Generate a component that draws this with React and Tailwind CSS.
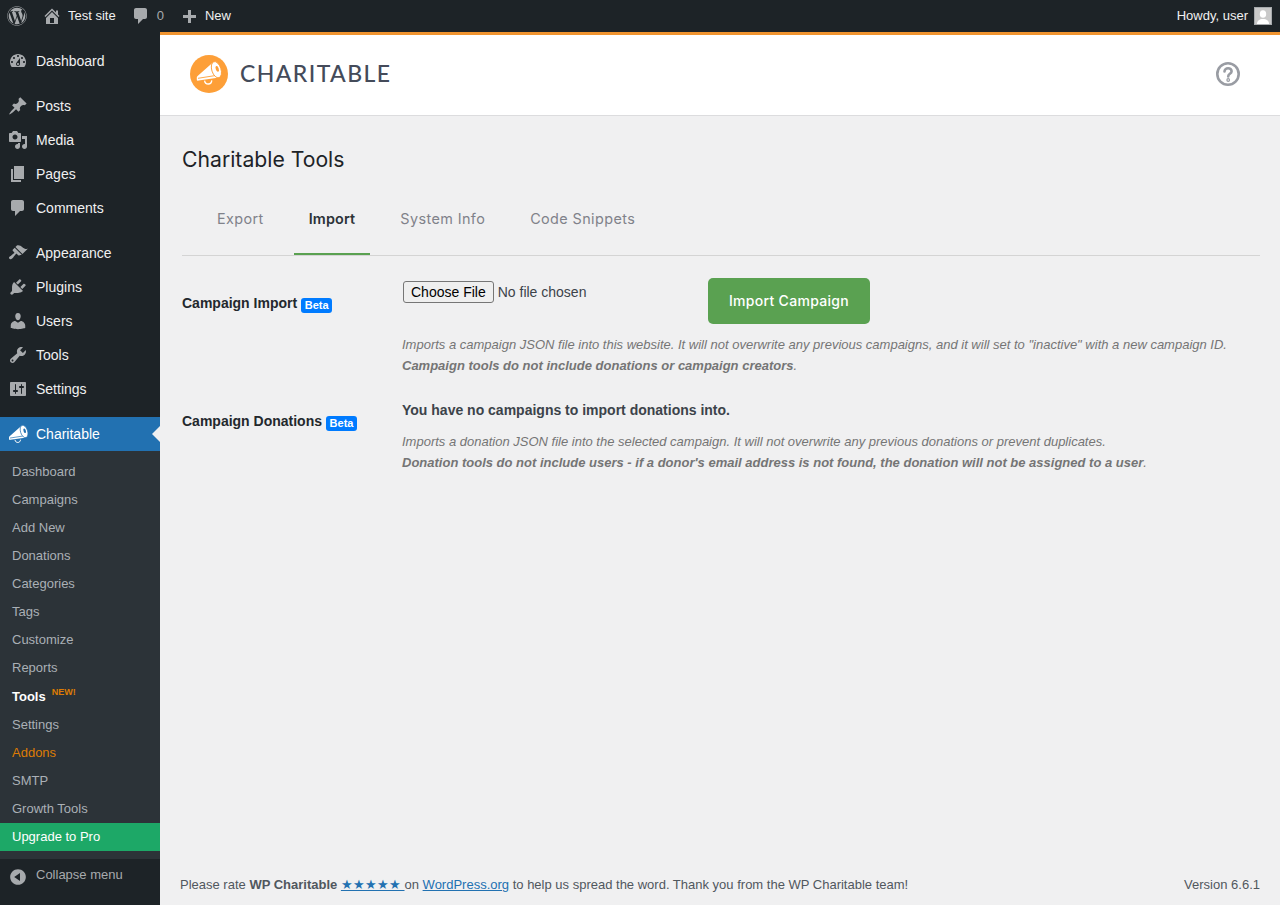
import React from 'react';
import { FaWordpress } from 'react-icons/fa';

const sans = { fontFamily: '"Liberation Sans", Arial, sans-serif' };
const inter = { fontFamily: 'Inter, sans-serif' };

// dashicons, all on a 20x20 grid
const icons = {
    dashboard: 'M3.76 16h12.48c1.1-1.37 1.76-3.11 1.76-5 0-4.42-3.58-8-8-8s-8 3.58-8 8c0 1.89.66 3.63 1.76 5zM10 4c.55 0 1 .45 1 1s-.45 1-1 1-1-.45-1-1 .45-1 1-1zM6 6c.55 0 1 .45 1 1s-.45 1-1 1-1-.45-1-1 .45-1 1-1zm8 0c.55 0 1 .45 1 1s-.45 1-1 1-1-.45-1-1 .45-1 1-1zm-5.37 5.55L12 7v6c0 1.1-.9 2-2 2s-2-.9-2-2c0-.57.24-1.08.63-1.45zM4 10c.55 0 1 .45 1 1s-.45 1-1 1-1-.45-1-1 .45-1 1-1zm12 0c.55 0 1 .45 1 1s-.45 1-1 1-1-.45-1-1 .45-1 1-1zm-5 3c0-.55-.45-1-1-1s-1 .45-1 1 .45 1 1 1 1-.45 1-1z',
    posts: 'M10.44 3.02l1.82-1.82 6.36 6.35-1.83 1.82c-1.05-.68-2.48-.57-3.41.36l-.75.75c-.92.93-1.04 2.35-.35 3.41l-1.83 1.82-2.41-2.41-2.8 2.79c-.42.42-3.38 2.71-3.8 2.29s1.86-3.39 2.28-3.81l2.79-2.79L4.1 9.36l1.83-1.82c1.05.69 2.48.57 3.4-.36l.75-.75c.93-.92 1.05-2.35.36-3.41z',
    media: 'M13 11V4c0-.55-.45-1-1-1h-1.67L9 1H5L3.67 3H2c-.55 0-1 .45-1 1v7c0 .55.45 1 1 1h10c.55 0 1-.45 1-1zM7 4.5c1.38 0 2.5 1.12 2.5 2.5S8.38 9.5 7 9.5 4.5 8.38 4.5 7 5.62 4.5 7 4.5zM14 6h5v10.5c0 1.38-1.12 2.5-2.5 2.5S14 17.88 14 16.5s1.12-2.5 2.5-2.5c.17 0 .34.02.5.05V9h-3V6zm-4 8.05V13h2v3.5c0 1.38-1.12 2.5-2.5 2.5S7 17.88 7 16.5 8.12 14 9.5 14c.17 0 .34.02.5.05z',
    pages: 'M6 15V2h10v13H6zm-1 1h8v2H3V5h2v11z',
    comments: 'M5 2h9c1.1 0 2 .9 2 2v7c0 1.1-.9 2-2 2h-2l-5 5v-5H5c-1.1 0-2-.9-2-2V4c0-1.1.9-2 2-2z',
    appearance: 'M14.48 11.06L7.41 3.99l1.5-1.5c.5-.56 2.3-.47 3.51.32 1.21.8 1.43 1.28 2.91 2.1 1.18.64 2.45 1.26 4.45.85zm-.71.71L6.7 4.7 4.93 6.47c-.39.39-.39 1.02 0 1.41l1.06 1.06c.39.39.39 1.03 0 1.42-.6.6-1.43 1.11-2.21 1.69-.35.26-.7.53-1.01.84C1.43 13.23.4 14.75 1.4 15.75c.99.99 2.53-.03 3.82-1.37.31-.31.58-.66.84-1.02.57-.78 1.08-1.61 1.69-2.21.39-.39 1.02-.39 1.41 0l1.06 1.06c.39.39 1.02.39 1.41 0z',
    plugins: 'M13.11 4.36L9.87 7.6 8 5.73l3.24-3.24c.35-.34 1.05-.2 1.56.32.52.51.66 1.21.31 1.55zm-8 1.77l.91-1.12 9.01 9.01-1.19.84c-.71.71-2.63 1.16-3.82 1.16H6.14L4.9 17.26c-.59.59-1.54.59-2.12 0-.59-.58-.59-1.53 0-2.12l1.24-1.24v-3.88c0-1.13.4-3.19 1.09-3.89zm7.26 3.97l3.24-3.24c.34-.35 1.04-.21 1.55.31.52.51.66 1.21.31 1.55l-3.24 3.25z',
    users: 'M10 9.25c-2.27 0-2.73-3.44-2.73-3.44C7 4.02 7.82 2 9.97 2c2.16 0 2.98 2.02 2.71 3.81 0 0-.41 3.44-2.68 3.44zm0 2.57L12.72 10c2.39 0 4.52 2.33 4.52 4.53v2.49s-3.65 1.13-7.24 1.13c-3.65 0-7.24-1.13-7.24-1.13v-2.49c0-2.25 1.94-4.48 4.47-4.48z',
    tools: 'M16.68 9.77c-1.34 1.34-3.3 1.67-4.95.99l-5.41 6.52c-.99.99-2.59.99-3.58 0s-.99-2.59 0-3.57l6.52-5.42c-.68-1.65-.35-3.61.99-4.95 1.28-1.28 3.12-1.62 4.72-1.06l-2.89 2.89 2.82 2.82 2.86-2.87c.53 1.58.18 3.39-1.08 4.65zM3.81 16.21c.4.39 1.04.39 1.43 0 .4-.4.4-1.04 0-1.43-.39-.4-1.03-.4-1.43 0-.39.39-.39 1.03 0 1.43z',
    settings: 'M18 16V4c0-.55-.45-1-1-1H3c-.55 0-1 .45-1 1v12c0 .55.45 1 1 1h14c.55 0 1-.45 1-1zM8 11h1c.55 0 1 .45 1 1s-.45 1-1 1H8v1.5c0 .28-.22.5-.5.5s-.5-.22-.5-.5V13H6c-.55 0-1-.45-1-1s.45-1 1-1h1V5.5c0-.28.22-.5.5-.5s.5.22.5.5V11zm5-2h-1c-.55 0-1-.45-1-1s.45-1 1-1h1V5.5c0-.28.22-.5.5-.5s.5.22.5.5V7h1c.55 0 1 .45 1 1s-.45 1-1 1h-1v5.5c0 .28-.22.5-.5.5s-.5-.22-.5-.5V9z',
    home: 'M16 8.5l1.53 1.53-1.06 1.06L10 4.62l-6.47 6.47-1.06-1.06L10 2.5l4 4v-2h2v4zm-6-2.46l6 5.99V18H4v-5.97zM12 17v-5H8v5h4z',
    plus: 'M17 9v3h-5v5H9v-5H4V9h5V4h3v5h5z',
    collapse: 'M10 2.16c4.33 0 7.84 3.51 7.84 7.84s-3.51 7.84-7.84 7.84S2.16 14.33 2.16 10 5.71 2.16 10 2.16zm2 11.72V6.12L6.18 9.97z',
};

const Dash = ({ name, className }) => (
    <svg viewBox="0 0 20 20" fill="currentColor" className={className}>
        <path d={icons[name]} />
    </svg>
);

// megaphone from the Charitable logo, drawn on the logo's 38px grid
const Megaphone = ({ className, viewBox = '0 0 38 38', hole }) => (
    <svg viewBox={viewBox} className={className}>
        <path d="M7.6 21 L22 8.2 L27.5 22.8 L8.6 25.6 C7.4 25.8 6.8 25.2 6.8 24.4 L6.8 22.6 C6.8 22 7.1 21.5 7.6 21 Z" fill="#fff" />
        <path d="M8 23.3 L25 20.6" stroke={hole} strokeWidth=".9" fill="none" />
        <ellipse cx="26.4" cy="14.7" rx="4.6" ry="8.4" transform="rotate(-18 26.4 14.7)" fill="#fff" stroke={hole} strokeWidth=".9" />
        <ellipse cx="27.2" cy="13.8" rx="1.5" ry="3" transform="rotate(-18 27.2 13.8)" fill={hole} />
        <path d="M14.6 25.6 c.2 2.3 1.9 3.4 3.7 3.4 s3.3-1.2 3.5-3.6" fill="none" stroke="#fff" strokeWidth="1.3" />
    </svg>
);

const mainMenu = [
    [['dashboard', 'Dashboard']],
    [['posts', 'Posts'], ['media', 'Media'], ['pages', 'Pages'], ['comments', 'Comments']],
    [['appearance', 'Appearance'], ['plugins', 'Plugins'], ['users', 'Users'], ['tools', 'Tools'], ['settings', 'Settings']],
];

const subMenu = ['Dashboard', 'Campaigns', 'Add New', 'Donations', 'Categories', 'Tags', 'Customize', 'Reports'];
const subMenuEnd = ['Settings', 'Addons', 'SMTP', 'Growth Tools'];

const Sidebar = () => (
    <aside className="w-40 shrink-0 bg-[#1d2327] text-sm text-[#f0f0f1]" style={sans}>
        <nav className="pt-3">
            {mainMenu.map((group, i) => (
                <div key={i} className="mb-[11px]">
                    {group.map(([icon, label]) => (
                        <div key={label} className="flex h-[34px] items-center">
                            <Dash name={icon} className="ml-[8px] h-5 w-5 text-[#a7aaad]" />
                            <span className="ml-2">{label}</span>
                        </div>
                    ))}
                </div>
            ))}
            <div className="relative flex h-[34px] items-center bg-[#2271b1] text-white">
                <Megaphone className="ml-[8px] h-5 w-5" viewBox="5.5 5 26 26" hole="#2271b1" />
                <span className="ml-2">Charitable</span>
                <span className="absolute right-0 top-[9px] border-y-[8px] border-r-[8px] border-y-transparent border-r-[#f0f0f1]" />
            </div>
            <div className="bg-[#2c3338] pt-[7px] pb-2 text-[13px] text-[#aab0b6]">
                {subMenu.map((label) => (
                    <div key={label} className="flex h-7 items-center pl-3">{label}</div>
                ))}
                <div className="flex h-[29px] items-center pl-3 pt-px font-bold text-white">
                    Tools
                    <span className="relative -top-[5px] ml-[6px] text-[9px] text-[#dd7c04]">NEW!</span>
                </div>
                {subMenuEnd.map((label) => (
                    <div key={label} className={`flex h-7 items-center pl-3 ${label === 'Addons' ? 'text-[#dd7c04]' : ''}`}>{label}</div>
                ))}
                <div className="flex h-7 items-center bg-[#1da867] pl-3 text-white">Upgrade to Pro</div>
            </div>
            <div className="flex h-[30px] items-center pt-[2px] text-[13px] text-[#a7aaad]">
                <Dash name="collapse" className="ml-2 mt-[3px] h-5 w-5" />
                <span className="ml-2">Collapse menu</span>
            </div>
        </nav>
    </aside>
);

const AdminBar = () => (
    <header className="flex h-8 items-center bg-[#1d2327] text-[13px] text-[#f0f0f1]" style={sans}>
        <FaWordpress className="ml-[7px] h-5 w-5 text-[#a7aaad]" />
        <Dash name="home" className="ml-[15px] h-5 w-5 text-[#a7aaad]" />
        <span className="ml-[6px]">Test site</span>
        <Dash name="comments" className="ml-[15px] h-5 w-5 text-[#a7aaad]" />
        <span className="ml-[6px] text-[#a7aaad]">0</span>
        <Dash name="plus" className="ml-[15px] h-5 w-5 text-[#a7aaad]" />
        <span className="ml-[6px]">New</span>
        <span className="ml-auto">Howdy, user</span>
        <div className="ml-[6px] mr-2 flex h-[18px] w-[18px] items-end justify-center overflow-hidden border border-[#a7aaad] bg-[#c9c9c9]">
            <svg viewBox="0 0 16 16" fill="#fff" className="h-4 w-4">
                <ellipse cx="8" cy="6" rx="3.2" ry="3.8" />
                <path d="M2 16c0-3.5 2.5-5 6-5s6 1.5 6 5z" />
            </svg>
        </div>
    </header>
);

const Beta = () => (
    <span className="ml-1 inline-block h-[15px] w-[31px] rounded-[3px] bg-[#007bff] text-center align-[-1px] text-[11px] font-bold leading-[15px] text-white">Beta</span>
);

const tabs = ['Export', 'Import', 'System Info', 'Code Snippets'];

const Main = () => (
    <main className="flex min-w-0 flex-1 flex-col bg-[#f0f0f1]">
        <div className="flex h-[84px] items-center border-t-[3px] border-b border-t-[#f0942f] border-b-[#dcdcde] bg-white pb-[2px] pl-[30px] pr-[38px]">
            <div className="h-[38px] w-[38px] rounded-full bg-[#fd9f38]">
                <Megaphone className="h-[38px] w-[38px]" hole="#fd9f38" />
            </div>
            <span className="mb-px ml-3 text-[23px] font-medium leading-none tracking-[1.4px] text-[#444b5a]" style={{ fontFamily: 'Lato, sans-serif' }}>CHARITABLE</span>
            <svg viewBox="0 0 28 28" className="mb-px ml-auto h-7 w-7" fill="none" stroke="#999ca3" strokeWidth="2.6">
                <circle cx="14" cy="14" r="10.7" />
                <path d="M10.5 11.5c0-2 1.6-3.3 3.6-3.3s3.5 1.3 3.5 3c0 2.6-3.4 2.6-3.4 5.2" strokeLinecap="round" />
                <circle cx="14.2" cy="20" r=".6" />
            </svg>
        </div>

        <div className="flex-1 pl-[22px] pr-5">
            <h1 className="mt-[30px] text-[21.2px] leading-[27px] text-[#1d2327]" style={inter}>Charitable Tools</h1>

            <div className="mt-[19px] flex gap-[15px] border-b border-[#d4d4d4] pl-5" style={inter}>
                {tabs.map((tab) => (
                    <div
                        key={tab}
                        className={`flex h-[63px] items-center border-b-2 px-[15px] pb-[7px] text-[14.4px] ${
                            tab === 'Import' ? 'border-[#5aa151] font-semibold tracking-[0.15px] text-[#2c3338]' : 'border-transparent tracking-[0.4px] text-[#80828a]'
                        }`}
                    >
                        {tab}
                    </div>
                ))}
            </div>

            <div className="text-sm text-[#3c434a]" style={sans}>
                <div className="mt-[22px] flex">
                    <div className="w-[220px] pt-[15px] font-bold text-[#23282d]">Campaign Import<Beta /></div>
                    <div className="flex-1">
                        <div className="flex h-[46px] items-start">
                            <div className="mt-[3px] flex w-[306px] items-center pl-px">
                                <button className="h-[22px] rounded-[3px] border border-[#767676] bg-[#efefef] px-[7px] text-black">Choose File</button>
                                <span className="ml-1">No file chosen</span>
                            </div>
                            <button className="h-[46px] w-[162px] rounded-[5px] bg-[#5aa151] text-sm font-medium tracking-[0.3px] text-white" style={inter}>Import Campaign</button>
                        </div>
                        <p className="mt-[10px] text-[13px] leading-[21px] italic text-[#757575]">
                            Imports a campaign JSON file into this website. It will not overwrite any previous campaigns, and it will set to "inactive" with a new campaign ID.<br />
                            <strong>Campaign tools do not include donations or campaign creators</strong>.
                        </p>
                    </div>
                </div>
                <div className="mt-6 flex">
                    <div className="w-[220px] pt-[11px] font-bold text-[#23282d]">Campaign Donations<Beta /></div>
                    <div className="flex-1">
                        <p className="font-bold">You have no campaigns to import donations into.</p>
                        <p className="mt-[11px] text-[13px] leading-[21px] italic text-[#757575]">
                            Imports a donation JSON file into the selected campaign. It will not overwrite any previous donations or prevent duplicates.<br />
                            <strong>Donation tools do not include users - if a donor's email address is not found, the donation will not be assigned to a user</strong>.
                        </p>
                    </div>
                </div>
            </div>
        </div>

        <footer className="flex h-10 items-center justify-between pl-5 pr-5 text-[13px] text-[#50575e]" style={sans}>
            <p>
                Please rate <strong>WP Charitable</strong> <a className="text-[#2271b1] underline" href="#">★★★★★ </a> on <a className="text-[#2271b1] underline" href="#">WordPress.org</a> to help us spread the word. Thank you from the WP Charitable team!
            </p>
            <p>Version 6.6.1</p>
        </footer>
    </main>
);

export default function App() {
    return (
        <div className="flex h-[905px] flex-col overflow-hidden">
            <AdminBar />
            <div className="flex min-h-0 flex-1">
                <Sidebar />
                <Main />
            </div>
        </div>
    );
}
